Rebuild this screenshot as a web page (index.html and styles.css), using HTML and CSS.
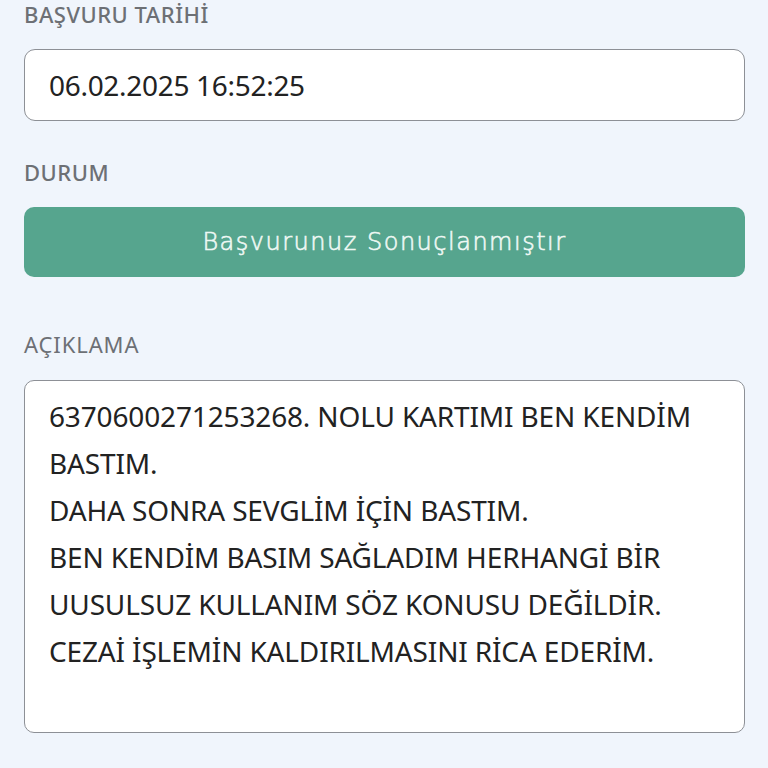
FILE: index.html
```html
<!DOCTYPE html>
<html lang="tr">
<head>
<meta charset="utf-8">
<link rel="stylesheet" href="styles.css">
</head>
<body>
<main class="form">
  <div class="field">
    <div class="label label-first">BAŞVURU TARİHİ</div>
    <div class="input">06.02.2025 16:52:25</div>
  </div>
  <div class="field">
    <div class="label label-status">DURUM</div>
    <div class="status">Başvurunuz Sonuçlanmıştır</div>
  </div>
  <div class="field">
    <div class="label label-desc">AÇIKLAMA</div>
    <div class="textarea">
      <div class="line">6370600271253268. NOLU KARTIMI BEN KENDİM</div>
      <div class="line">BASTIM.</div>
      <div class="line">DAHA SONRA SEVGLİM İÇİN BASTIM.</div>
      <div class="line">BEN KENDİM BASIM SAĞLADIM HERHANGİ BİR</div>
      <div class="line">UUSULSUZ KULLANIM SÖZ KONUSU DEĞİLDİR.</div>
      <div class="line">CEZAİ İŞLEMİN KALDIRILMASINI RİCA EDERİM.</div>
    </div>
  </div>
</main>
</body>
</html>
```
FILE: styles.css
```css
html, body {
  margin: 0;
  padding: 0;
  background: #f0f5fc;
}
body {
  font-family: "Noto Sans", "DejaVu Sans", sans-serif;
  color: #222;
}
.form {
  padding: 0 23px 0 24px;
  display: flex;
  flex-direction: column;
}
.field {
  display: flex;
  flex-direction: column;
}
.label {
  font-size: 22px;
  line-height: 28px;
  color: #6d7075;
  font-weight: 500;
  letter-spacing: 0.5px;
}
.label-first {
  margin-bottom: 21px;
}
.label-status {
  margin-top: 37px;
  margin-bottom: 21px;
}
.label-desc {
  margin-top: 53px;
  margin-bottom: 22px;
  font-weight: 400;
  letter-spacing: 0.9px;
}
.input {
  height: 72px;
  border: 1.5px solid #8d9096;
  border-radius: 11px;
  background: #fff;
  box-sizing: border-box;
  display: flex;
  align-items: center;
  padding-left: 24px;
  font-size: 28px;
  letter-spacing: -0.3px;
  color: #222;
}
.status {
  height: 70px;
  border-radius: 10px;
  background: #56a58e;
  color: #eef8f4;
  display: flex;
  align-items: center;
  justify-content: center;
  font-family: "DejaVu Sans", "Noto Sans", sans-serif;
  font-size: 24px;
  font-weight: 200;
  letter-spacing: 1.5px;
  -webkit-text-stroke: 0.6px #eef8f4;
}
.textarea {
  height: 353px;
  box-sizing: border-box;
  border: 1.5px solid #8d9096;
  border-radius: 10px;
  background: #fff;
  padding: 12px 0 0 24px;
  font-size: 28px;
  line-height: 47px;
  color: #222;
}
.line {
  white-space: nowrap;
  letter-spacing: -0.15px;
}
```
